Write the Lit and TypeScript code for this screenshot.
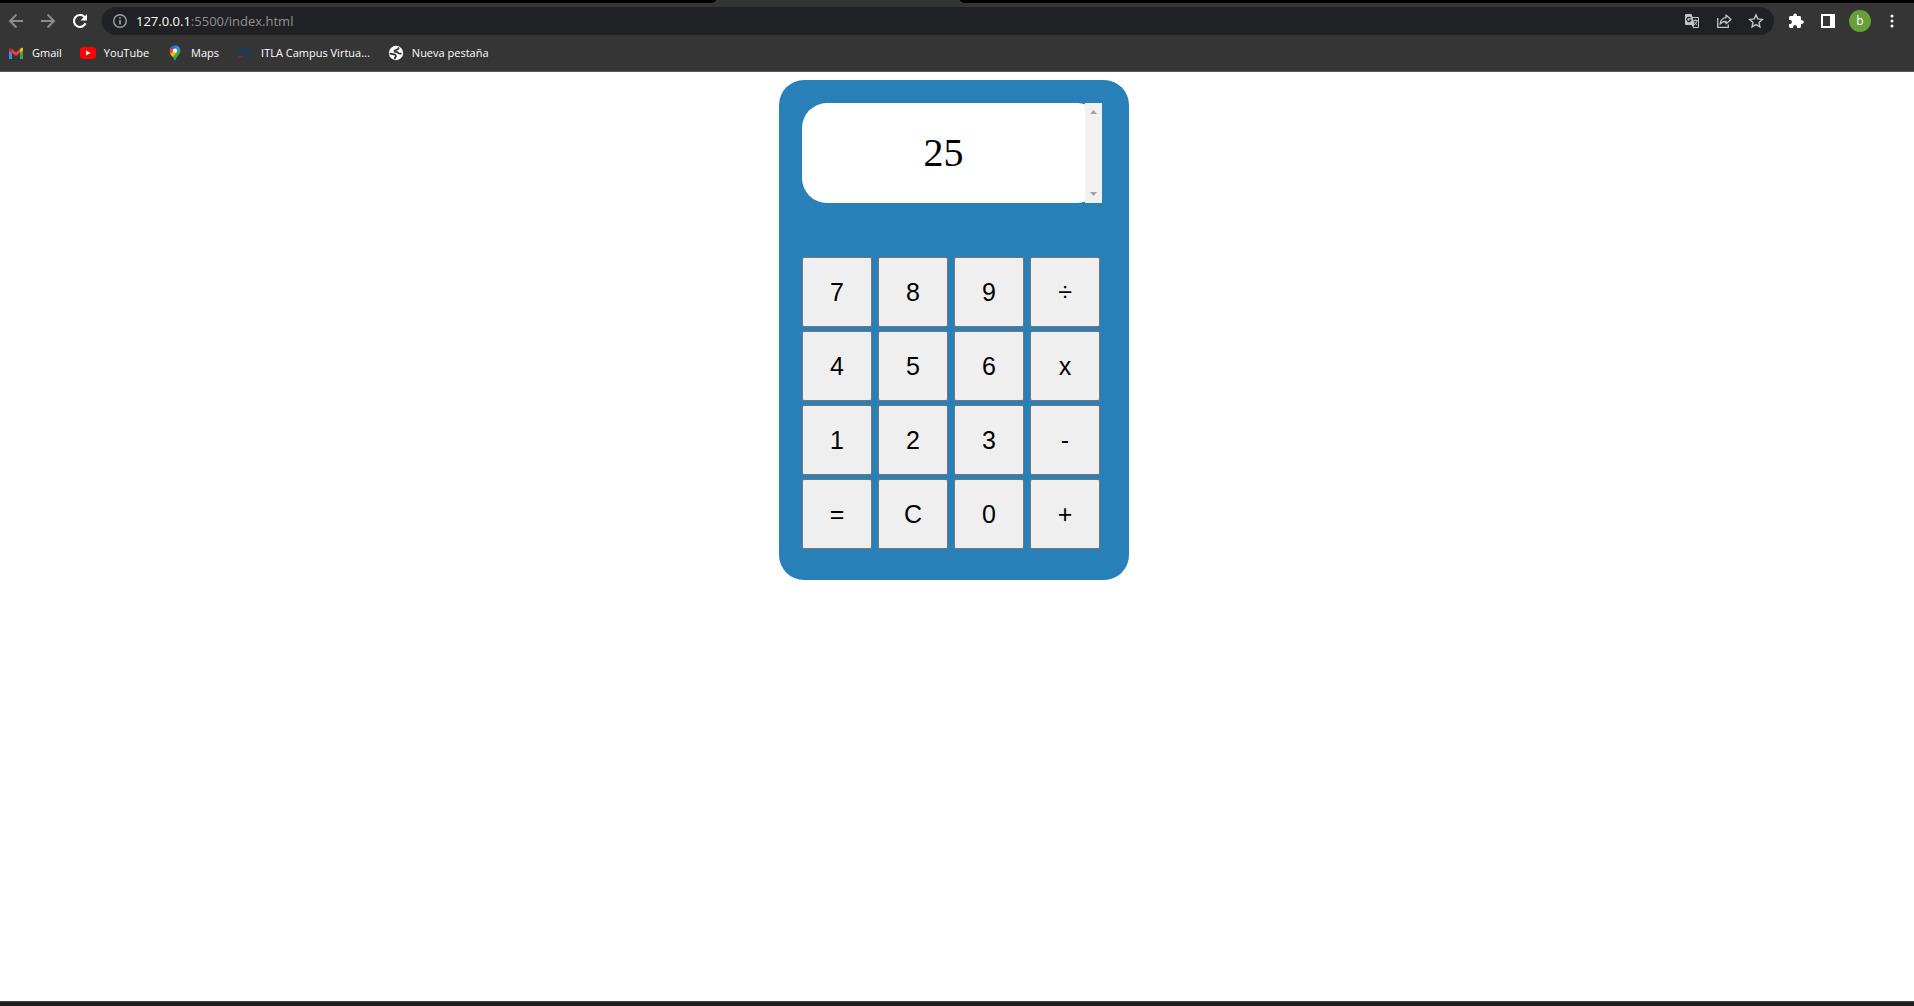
import { LitElement, html, css } from "lit";
import { customElement, state } from "lit/decorators.js";

const arrow = (d: string) => html`<svg class="icon" width="16" height="16" viewBox="0 0 16 16" fill="none" stroke="#8b8b8b" stroke-width="2" aria-hidden="true"><path d=${d} /></svg>`;

const gmail = html`<svg width="16" height="16" viewBox="0 0 16 16" aria-hidden="true">
  <path fill="#4285f4" d="M1 14h3V7.400L1 5.300z" />
  <path fill="#34a853" d="M12 14H15V5.300l-3 2.100z" />
  <path fill="#fbbc04" d="M12 4v3.900L15 5.600V4.200c0-1.600-1.600-2-3-.2z" />
  <path fill="#ea4335" d="M4 7.800V4l4 3.200L12 4v3.800L8 11z" />
  <path fill="#c5221f" d="M1 4.200v1.400l3 2.200V4C2.600 2.200 1 2.600 1 4.200z" />
</svg>`;

const youtube = html`<svg width="16" height="16" viewBox="0 0 16 16" aria-hidden="true">
  <rect y="2" width="16" height="12" rx="3" fill="#f00" />
  <path fill="#fff" d="M6 5.500v5L10.500 8z" />
</svg>`;

const maps = html`<svg width="16" height="16" viewBox="0 0 16 16" aria-hidden="true">
  <path fill="#34a853" d="M3.500 9.200C5 11 6.500 12 7.200 14.500c.3 1.300 1.300 1.300 1.600 0C9.500 11.500 13 9.800 13.400 5.800c0-1.200-.2-1.900-.7-2.700z" />
  <path fill="#fbbc04" d="M3.500 9.200c.8 1.100 1.600 1.900 2.300 2.900L10 7.200 6.200 3.900 2.900 7.800z" />
  <path fill="#ea4335" d="M2.600 5.500c0 1.500.3 2.700.9 3.700L6.600 5.500 3.800 2.200C3 3.100 2.600 4.200 2.600 5.500z" />
  <path fill="#1a73e8" d="M3.800 2.200l2.800 3.300L9.700.4C7.500-.2 5.300.4 3.800 2.200z" />
  <path fill="#4285f4" d="M9.700.4L6.600 4.200 9.600 7l3.100-3.900C12 1.800 11 .8 9.700.4z" />
  <circle cx="8" cy="5.500" r="2.100" fill="#fff" />
</svg>`;

const campus = html`<svg width="16" height="16" viewBox="0 0 16 16" fill="none" aria-hidden="true">
  <path stroke="#1f3a5f" stroke-width="1.500" d="M2 9l1.200-5.500M3 6c1-2.500 3.200-3 2.700-.7L5 9M5.500 6c1-2.500 3.200-3 2.700-.7L7.500 9M10.300 4L9.600 8c0 1.500 1.800 1.500 2.800 0l1.100-4.500-1.300 8c-.5 2-3 2.500-4 1" />
  <path stroke="#7d2630" stroke-width="2" d="M1 12h5.500" />
</svg>`;

const globe = html`<svg width="16" height="16" viewBox="0 0 16 16" aria-hidden="true">
  <circle cx="8" cy="8" r="7.200" fill="#fff" />
  <path fill="none" stroke="#353535" stroke-width="1.800" stroke-linecap="round" stroke-linejoin="round" d="M10.500 3.200c-.3 1.300-1.300 1.500-2.600 1.800C6.500 5.400 6 6.500 7.300 6.800c1.600.3 2.500.3 3 1.300.4.700 1.400.6 2.600.5M2.300 8.600c1.600.7 3.700.2 4.700 1 .9.800 1.300 1.500.6 2.100-.5.500-.6.900-.6 1.700" />
</svg>`;

const bookmarks = [
  { label: "Gmail", icon: gmail },
  { label: "YouTube", icon: youtube },
  { label: "Maps", icon: maps },
  { label: "ITLA Campus Virtua...", icon: campus },
  { label: "Nueva pestaña", icon: globe },
];

@customElement("browser-toolbar")
export class BrowserToolbar extends LitElement {
  static styles = css`
    :host { display: block; background: #353535; border-bottom: 1px solid #5c5a5a; font-family: "Open Sans", "Noto Sans", sans-serif; }
    svg { display: block; flex: none; }
    button { border: 0; padding: 0; background: none; color: inherit; font-family: inherit; display: flex; align-items: center; justify-content: center; }
    .tabs { display: flex; height: 3px; }
    .strip { background: #000; }
    .strip.before { flex: 3; border-bottom-right-radius: 6px 3px; }
    .strip.after { flex: 4; border-bottom-left-radius: 6px 3px; }
    .tab { width: 244px; }
    .row { display: flex; align-items: center; padding: 4px 14px 0 8px; }
    .nav { display: flex; gap: 16px; padding-right: 14px; }
    .address { flex: 1; display: flex; align-items: center; height: 28px; border-radius: 14px; background: #202124; padding: 0 10px; color: #919191; }
    .url { flex: 1; min-width: 0; margin-left: 8px; font-size: 13px; line-height: 20px; }
    .host { color: #fff; }
    .actions { display: flex; gap: 16px; }
    .tools { display: flex; align-items: center; gap: 16px; padding-left: 14px; }
    .avatar { width: 22px; height: 22px; margin: 0 -3px; border-radius: 50%; background: #689f38; color: #fff; font-size: 12px; line-height: 22px; }
    .bookmarks { display: flex; gap: 18px; padding: 8px 8px; height: 20px; }
    .bookmark { display: flex; align-items: center; gap: 8px; color: #fff; text-decoration: none; font-size: 11px; line-height: 20px; white-space: nowrap; }
  `;

  render() {
    return html`
      <div class="tabs"><div class="strip before"></div><div class="tab"></div><div class="strip after"></div></div>
      <div class="row">
        <nav class="nav">
          <button aria-label="Back">${arrow("M15 8H2M8.500 1.500L2 8l6.500 6.500")}</button>
          <button aria-label="Forward">${arrow("M1 8h13M7.500 1.500L14 8l-6.500 6.500")}</button>
          <button aria-label="Reload"><svg width="16" height="16" viewBox="0 0 16 16" aria-hidden="true"><path d="M13.500 10.300A6 6 0 1 1 12.200 3.700L13.500 5" fill="none" stroke="#fff" stroke-width="2.200" /><path d="M15 1v6.500H8.500z" fill="#fff" /></svg></button>
        </nav>
        <div class="address">
          <svg width="16" height="16" viewBox="0 0 16 16" aria-hidden="true"><circle cx="8" cy="8" r="6.300" fill="none" stroke="#9aa0a6" stroke-width="1.400" /><path d="M8 7v4.500M8 4.200v1.600" stroke="#9aa0a6" stroke-width="1.700" /></svg>
          <span class="url"><span class="host">127.0.0.1</span>:5500/index.html</span>
          <div class="actions">
            <button aria-label="Translate"><svg width="16" height="16" viewBox="0 0 16 16" aria-hidden="true"><path fill="#c4c4c4" d="M2 1h5.500l1 3H14a1 1 0 0 1 1 1v9a1 1 0 0 1-1 1H9l-1.200-3H2a1 1 0 0 1-1-1V2a1 1 0 0 1 1-1z" /><path fill="#202124" d="M8.800 5H14v9H9.200l1.500-2z" /><path fill="none" stroke="#202124" stroke-width="1.200" d="M6.600 5.200A2.100 2.100 0 1 0 6.900 7H5" /><path fill="none" stroke="#c4c4c4" d="M9.700 7.500h4M11.500 6.500v1M13 7.500c-.3 2-1.200 3.300-2.500 4M10.500 8.700c.6 1.600 1.500 2.600 2.800 3.300" /></svg></button>
            <button aria-label="Share"><svg width="16" height="16" viewBox="0 0 16 16" fill="none" stroke="#c4c4c4" stroke-width="1.300" aria-hidden="true"><path d="M1.700 5v9.300h10.600V11.500" /><path stroke-linejoin="round" d="M10 2l5 4.500-5 4.300V8.500C7.500 8.400 5.500 9.200 4 11.200c.4-3.600 2.500-6.200 6-6.600z" /></svg></button>
            <button aria-label="Bookmark this page"><svg width="16" height="16" viewBox="0 0 16 16" fill="none" stroke="#c4c4c4" stroke-width="1.400" aria-hidden="true"><path d="M8 1.900l1.800 4 4.500.5-3.300 3 .9 4.400L8 11.600l-3.900 2.200.9-4.400-3.300-3 4.500-.5z" /></svg></button>
          </div>
        </div>
        <div class="tools">
          <button aria-label="Extensions"><svg width="16" height="16" viewBox="0 0 16 16" aria-hidden="true"><path fill="#fff" d="M14 7.300h-1V4.500C13 3.700 12.400 3 11.600 3H8.900V2.200a1.800 1.800 0 0 0-3.600 0V3H2.500C1.700 3 1 3.700 1 4.500v2.600h1a1.900 1.900 0 0 1 0 3.900H1v2.600c0 .8.700 1.400 1.500 1.400h2.600v-1a1.900 1.900 0 0 1 3.900 0v1h2.600c.8 0 1.400-.6 1.400-1.400v-2.700h1a1.800 1.800 0 0 0 0-3.600z" /></svg></button>
          <button aria-label="Side panel"><svg width="16" height="16" viewBox="0 0 16 16" aria-hidden="true"><path fill="#fff" fill-rule="evenodd" d="M1 1h14v14H1zM3 3v10h7V3z" /></svg></button>
          <button class="avatar" aria-label="Profile">b</button>
          <button aria-label="Menu"><svg width="16" height="16" viewBox="0 0 16 16" fill="#fff" aria-hidden="true"><circle cx="8" cy="3" r="1.500" /><circle cx="8" cy="8" r="1.500" /><circle cx="8" cy="13" r="1.500" /></svg></button>
        </div>
      </div>
      <nav class="bookmarks">${bookmarks.map((b) => html`<a class="bookmark" href="#">${b.icon}${b.label}</a>`)}</nav>
    `;
  }
}

const keys = ["7", "8", "9", "÷", "4", "5", "6", "x", "1", "2", "3", "-", "=", "C", "0", "+"];

@customElement("calculator-pad")
export class CalculatorPad extends LitElement {
  static styles = css`
    :host { display: block; box-sizing: border-box; width: 350px; padding: 23px 23px 31px; border-radius: 25px; background: #2980b9; }
    .display { display: flex; width: 300px; height: 100px; border-radius: 25px; background: #fff; }
    .value { flex: 1; text-align: center; font: 40px/100px "Liberation Serif", serif; color: #000; }
    .scroll { display: flex; flex-direction: column; justify-content: space-between; align-items: center; box-sizing: border-box; width: 17px; padding: 7px 0; background: #f1f1f1; }
    .keys { display: grid; grid-template-columns: repeat(4, 70px); gap: 4px 6px; margin-top: 54px; }
    .key { height: 70px; padding: 0; border: 1px solid #767676; border-radius: 2px; background: #efefef; color: #000; font: 25px "Liberation Sans", sans-serif; }
  `;

  @state() private shown = "25";
  private stored = 0;
  private operator = "";
  private fresh = true;

  private compute(): number {
    const n = Number(this.shown);
    switch (this.operator) {
      case "+": return this.stored + n;
      case "-": return this.stored - n;
      case "x": return this.stored * n;
      case "÷": return this.stored / n;
      default: return n;
    }
  }

  private press(key: string) {
    if (/\d/.test(key)) {
      this.shown = this.fresh ? key : this.shown + key;
      this.fresh = false;
    } else if (key === "C") {
      this.shown = "0";
      this.stored = 0;
      this.operator = "";
      this.fresh = true;
    } else {
      this.stored = this.compute();
      this.shown = String(this.stored);
      this.operator = key === "=" ? "" : key;
      this.fresh = true;
    }
  }

  render() {
    return html`
      <div class="display">
        <output class="value">${this.shown}</output>
        <div class="scroll" aria-hidden="true">
          <svg width="7" height="4" viewBox="0 0 7 4"><path fill="#a3a3a3" d="M0 4L3.500 0 7 4z" /></svg>
          <svg width="7" height="4" viewBox="0 0 7 4"><path fill="#a3a3a3" d="M0 0l3.500 4L7 0z" /></svg>
        </div>
      </div>
      <div class="keys">${keys.map((k) => html`<button class="key" @click=${() => this.press(k)}>${k}</button>`)}</div>
    `;
  }
}

@customElement("app-root")
export class AppRoot extends LitElement {
  static styles = css`
    :host { display: flex; flex-direction: column; min-height: 100vh; background: #fff; }
    .page { flex: 1; display: flex; justify-content: center; align-items: flex-start; padding: 8px 6px 8px 0; }
    .taskbar { height: 4px; border-top: 1px solid #444; background: #202022; }
  `;

  render() {
    return html`
      <browser-toolbar></browser-toolbar>
      <main class="page"><calculator-pad></calculator-pad></main>
      <footer class="taskbar"></footer>
    `;
  }
}
